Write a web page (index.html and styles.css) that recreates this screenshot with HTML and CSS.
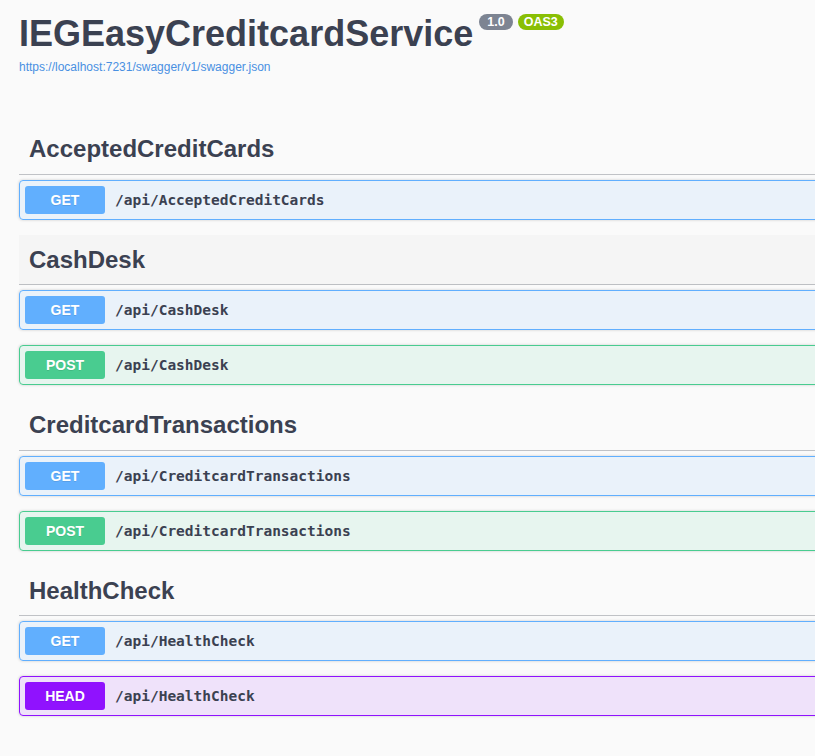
FILE: index.html
```html
<!DOCTYPE html>
<html>
<head>
<meta charset="utf-8">
<link rel="stylesheet" href="styles.css">
</head>
<body>
<div class="wrapper">
  <div class="info">
    <h2 class="title">IEGEasyCreditcardService <span class="stamps"><span class="stamp ver">1.0</span><span class="stamp oas">OAS3</span></span></h2>
    <a class="link" href="#">https://localhost:7231/swagger/v1/swagger.json</a>
  </div>

  <div class="tag-section">
    <h3 class="tag">AcceptedCreditCards</h3>
    <div class="op get"><span class="method">GET</span><span class="path">/api/AcceptedCreditCards</span></div>
  </div>

  <div class="tag-section">
    <h3 class="tag hover">CashDesk</h3>
    <div class="op get"><span class="method">GET</span><span class="path">/api/CashDesk</span></div>
    <div class="op post"><span class="method">POST</span><span class="path">/api/CashDesk</span></div>
  </div>

  <div class="tag-section">
    <h3 class="tag">CreditcardTransactions</h3>
    <div class="op get"><span class="method">GET</span><span class="path">/api/CreditcardTransactions</span></div>
    <div class="op post"><span class="method">POST</span><span class="path">/api/CreditcardTransactions</span></div>
  </div>

  <div class="tag-section">
    <h3 class="tag">HealthCheck</h3>
    <div class="op get"><span class="method">GET</span><span class="path">/api/HealthCheck</span></div>
    <div class="op head"><span class="method">HEAD</span><span class="path">/api/HealthCheck</span></div>
  </div>
</div>
</body>
</html>
```

FILE: styles.css
```css
html, body {
  margin: 0;
  padding: 0;
  overflow: hidden;
  background: #fafafa;
  font-family: "Liberation Sans", Arial, sans-serif;
  color: #3b4151;
}
.wrapper {
  width: 1100px;
  padding: 0 0 0 19px;
}
.info {
  padding-top: 14px;
  margin-bottom: 50px;
}
.title {
  margin: 0;
  font-size: 36px;
  font-weight: bold;
  line-height: 40px;
  color: #3b4151;
}
.stamps {
  display: inline-flex;
  gap: 5px;
  vertical-align: top;
  margin-left: -4px;
  position: relative;
  top: 0;
}
.stamp {
  display: inline-block;
  font-size: 12.5px;
  font-weight: bold;
  line-height: 14px;
  padding: 1px 6px;
  border-radius: 10px;
  color: #fff;
}
.ver { background: #7d8492; padding: 1px 8px; }
.oas { background: #89bf04; }
.link {
  display: block;
  margin-top: 6px;
  font-size: 12px;
  line-height: 14px;
  color: #4990e2;
  text-decoration: none;
}
.tag {
  margin: 0 0 5px;
  padding: 10px 10px;
  font-size: 24px;
  font-weight: bold;
  line-height: 29.5px;
  border-bottom: 1px solid rgba(59, 65, 81, 0.3);
  color: #3b4151;
}
.tag.hover {
  background: rgba(0, 0, 0, 0.02);
}
.op {
  display: flex;
  align-items: center;
  padding: 5px;
  margin-bottom: 15px;
  border: 1px solid;
  border-radius: 4px;
  box-shadow: 0 0 3px rgba(0, 0, 0, 0.19);
}
.method {
  width: 80px;
  padding: 6px 0;
  text-align: center;
  font-size: 14px;
  font-weight: bold;
  line-height: 16px;
  color: #fff;
  border-radius: 3px;
  text-shadow: 0 1px 0 rgba(0, 0, 0, 0.1);
}
.path {
  padding: 0 10px;
  font-family: "DejaVu Sans Mono", monospace;
  font-size: 14.5px;
  font-weight: bold;
  color: #3b4151;
}
.get { border-color: #61affe; background: rgba(97, 175, 254, 0.1); }
.get .method { background: #61affe; }
.post { border-color: #49cc90; background: rgba(73, 204, 144, 0.1); }
.post .method { background: #49cc90; }
.head { border-color: #9012fe; background: rgba(144, 18, 254, 0.1); }
.head .method { background: #9012fe; }
```
